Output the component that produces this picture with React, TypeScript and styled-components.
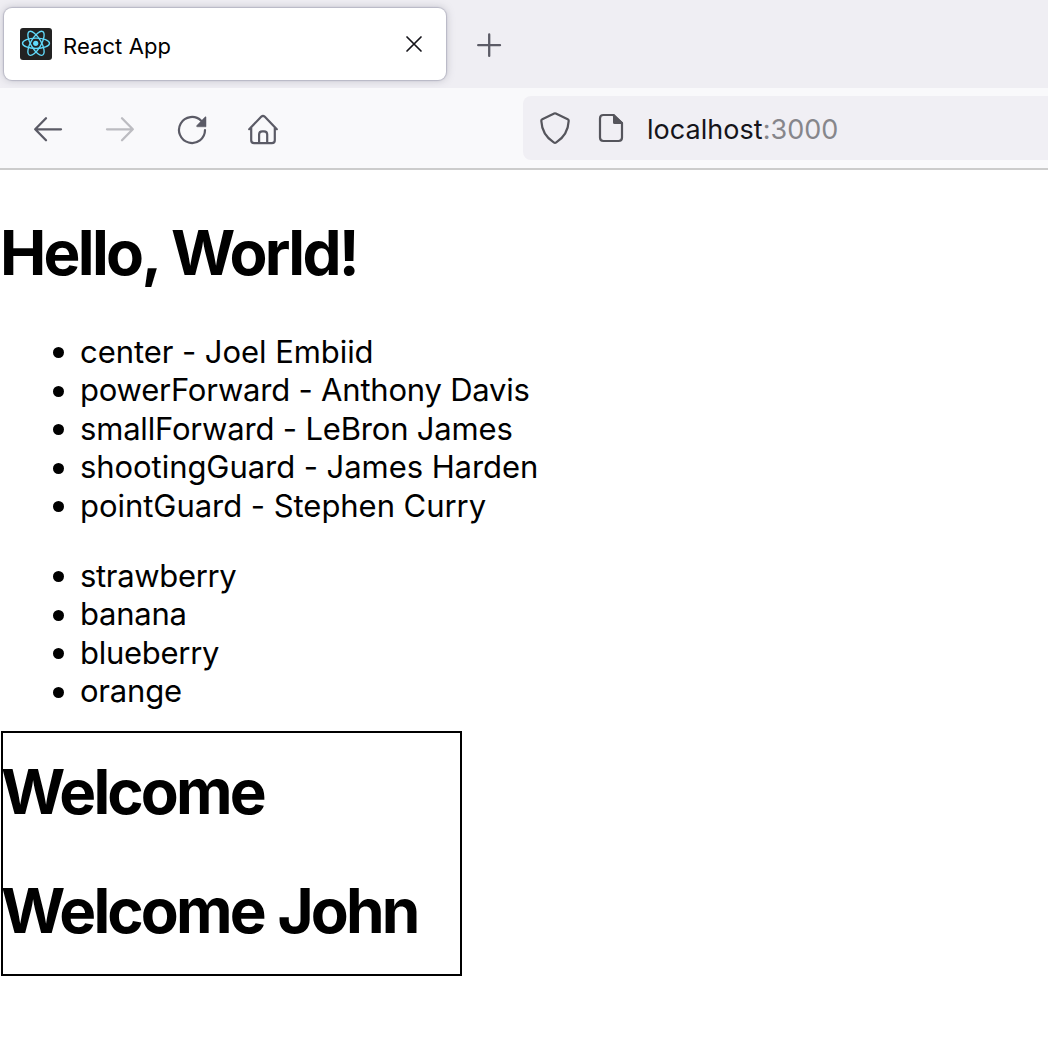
import React from "react";
import styled, { createGlobalStyle } from "styled-components";

const GlobalStyle = createGlobalStyle`
  * { box-sizing: border-box; }
  body {
    margin: 0;
    background: #fff;
    color: #000;
    font-family: Inter, "Liberation Sans", sans-serif;
    overflow: hidden;
  }
`;

const Window = styled.div`
  width: 100%;
  height: 1046px;
  display: flex;
  flex-direction: column;
  overflow: hidden;
`;

const TabStrip = styled.header`
  height: 88px;
  flex: none;
  display: flex;
  align-items: flex-start;
  padding: 8px 4px;
  background: #efeef3;
`;

const Tab = styled.div`
  width: 442px;
  height: 72px;
  display: flex;
  align-items: center;
  padding: 0 20px 0 16px;
  background: #fff;
  border-radius: 8px;
  box-shadow: 0 0 1px 1px #b9b9c6, 0 0 8px rgba(128, 128, 142, 0.45);
`;

const TabTitle = styled.span`
  flex: 1;
  padding: 4px 0 0 11px;
  font-size: 22px;
  line-height: 28px;
  letter-spacing: 0.08px;
`;

const IconButton = styled.button<{ $width: number; $height: number }>`
  width: ${(p) => p.$width}px;
  height: ${(p) => p.$height}px;
  display: flex;
  align-items: center;
  justify-content: center;
  padding: 0;
  border: 0;
  background: none;
  color: #5b5b66;

  &:disabled { color: #bcbcc1; }
`;

const CloseButton = styled(IconButton)`
  color: #15141a;
`;

const NewTab = styled(IconButton)`
  margin-left: 7px;
`;

const Toolbar = styled.nav`
  height: 82px;
  flex: none;
  display: flex;
  align-items: flex-start;
  padding: 8px 0 0 12px;
  background: #f9f9fb;
  border-bottom: 2px solid #ccc;
`;

const NavButtons = styled.div`
  width: 511px;
  flex: none;
  display: flex;
`;

const AddressBar = styled.div`
  flex: 1;
  height: 64px;
  display: flex;
  align-items: center;
  gap: 24px;
  padding-left: 16px;
  background: #f0eff4;
  border-radius: 8px 0 0 8px;
  color: #55555c;
`;

const Address = styled.span`
  font-size: 27px;
  line-height: 36px;
  margin-left: -4px;
  padding-top: 3px;
  letter-spacing: 0.03px;
  color: #15141a;
`;

const Port = styled.span`
  color: #86868b;
`;

const Page = styled.main`
  flex: 1;
  padding-top: 45px;
`;

const Title = styled.h1<{ $tracking?: number; $wordGap?: number }>`
  margin: 0;
  font-size: 62px;
  line-height: 76px;
  font-weight: 700;
  letter-spacing: ${(p) => p.$tracking ?? -2.9}px;
  word-spacing: ${(p) => p.$wordGap ?? 0}px;
  white-space: nowrap;
`;

const List = styled.ul<{ $top: number }>`
  margin: ${(p) => p.$top}px 0 0;
  padding: 0;
  list-style: none;
`;

const Item = styled.li<{ $tracking?: number }>`
  display: flex;
  align-items: center;
  gap: 16.3px;
  padding-left: 52.700px;
  font-size: 31px;
  line-height: 38.5px;
  letter-spacing: ${(p) => p.$tracking ?? 0}px;

  &::before {
    content: "";
    width: 11px;
    height: 11px;
    margin-top: 2px;
    border-radius: 50%;
    background: #000;
  }
`;

const WelcomeBox = styled.section`
  width: 461px;
  height: 245px;
  margin: 20.4px 0 0 1px;
  padding-top: 21px;
  display: flex;
  flex-direction: column;
  gap: 43px;
  border: 2px solid #000;

  ${Title} { margin-left: -2px; }
`;

const ReactLogo = () => (
  <svg width="32" height="32" viewBox="0 0 32 32" fill="none">
    <rect width="32" height="32" rx="3" fill="#222" />
    <g stroke="#61dafb" strokeWidth="1.35">
      <ellipse cx="16" cy="15.3" rx="13.5" ry="5.2" />
      <ellipse cx="16" cy="15.3" rx="13.5" ry="5.2" transform="rotate(60 16 15.3)" />
      <ellipse cx="16" cy="15.3" rx="13.5" ry="5.2" transform="rotate(120 16 15.3)" />
    </g>
    <circle cx="15.7" cy="15.3" r="2.6" fill="#61dafb" />
  </svg>
);

const CloseIcon = () => (
  <svg width="24" height="24" viewBox="0 0 24 24" fill="none" stroke="currentColor" strokeWidth="1.7" strokeLinecap="round">
    <path d="M5 5l14 14M19 5L5 19" />
  </svg>
);

const PlusIcon = () => (
  <svg width="32" height="32" viewBox="0 0 32 32" fill="none" stroke="currentColor" strokeWidth="2.3" strokeLinecap="round">
    <path d="M16.200 5.400v21.500M5.200 16.200h21.800" />
  </svg>
);

const BackIcon = () => (
  <svg width="32" height="32" viewBox="0 0 32 32" fill="none" stroke="currentColor" strokeWidth="2.3" strokeLinecap="round" strokeLinejoin="round">
    <path d="M29 16.3H3.2M14 5.3L3.2 16.3 14 27.3" />
  </svg>
);

const ForwardIcon = () => (
  <svg width="32" height="32" viewBox="0 0 32 32" fill="none" stroke="currentColor" strokeWidth="2.3" strokeLinecap="round" strokeLinejoin="round">
    <path d="M3 16.3h25.8M18 5.3l10.8 11L18 27.3" />
  </svg>
);

const ReloadIcon = () => (
  <svg width="32" height="32" viewBox="0 0 32 32" fill="none">
    <path d="M25.2 7.800A13 13 0 1 0 29 17" stroke="currentColor" strokeWidth="2.2" strokeLinecap="round" />
    <path d="M30 4v9.8h-8.600c-.9 0-1.100-.8-.5-1.400l7.900-8.200c.5-.5 1.200-.7 1.200-.2z" fill="currentColor" stroke="currentColor" strokeWidth=".5" />
  </svg>
);

const HomeIcon = () => (
  <svg width="32" height="32" viewBox="0 0 32 32" fill="none" stroke="currentColor" strokeWidth="2.2" strokeLinecap="round" strokeLinejoin="round">
    <path d="M2.2 16.2L14.4 3.6q1.6-1.5 3.2 0L29.8 16.2M4.2 15v12.3q0 2.9 2.9 2.9h17.8q2.9 0 2.9-2.9V15" />
    <path d="M12.1 30V21.500q0-3.200 3.200-3.200h1.700q3.200 0 3.200 3.200V30" />
  </svg>
);

const ShieldIcon = () => (
  <svg width="32" height="32" viewBox="0 0 32 32" fill="none" stroke="currentColor" strokeWidth="2.2" strokeLinejoin="round">
    <path d="M15.200 1.500q.8-.4 1.600 0l11.900 5.700q1.100.5 1 1.700C29.300 17 26.500 24.500 17.300 30.400q-1.300.9-2.600 0C5.500 24.500 2.700 17 2.300 8.900q-.1-1.200 1-1.700z" />
  </svg>
);

const PageIcon = () => (
  <svg width="32" height="32" viewBox="0 0 32 32" fill="none">
    <path d="M18 3H8.400Q5 3 5 6.400v19.200Q5 29 8.400 29h15.200q3.400 0 3.400-3.400V11z" stroke="currentColor" strokeWidth="2.200" strokeLinejoin="round" />
    <path d="M18 2v8.400q0 1.600 1.600 1.600H28v-1.200L19.200 2z" fill="currentColor" />
  </svg>
);

const players = [
  { position: "center", name: "Joel Embiid", tracking: -0.06 },
  { position: "powerForward", name: "Anthony Davis", tracking: -0.21 },
  { position: "smallForward", name: "LeBron James", tracking: -0.18 },
  { position: "shootingGuard", name: "James Harden", tracking: -0.06 },
  { position: "pointGuard", name: "Stephen Curry", tracking: -0.04 },
];

const fruits = [
  { name: "strawberry", tracking: -0.33 },
  { name: "banana", tracking: -0.22 },
  { name: "blueberry", tracking: -0.28 },
  { name: "orange", tracking: -0.2 },
];

export default function App() {
  return (
    <>
      <GlobalStyle />
      <Window>
        <TabStrip>
          <Tab>
            <ReactLogo />
            <TabTitle>React App</TabTitle>
            <CloseButton $width={24} $height={24} aria-label="Close tab"><CloseIcon /></CloseButton>
          </Tab>
          <NewTab $width={72} $height={74} aria-label="New tab"><PlusIcon /></NewTab>
        </TabStrip>
        <Toolbar>
          <NavButtons>
            <IconButton $width={72} $height={66} aria-label="Back"><BackIcon /></IconButton>
            <IconButton $width={72} $height={66} aria-label="Forward" disabled><ForwardIcon /></IconButton>
            <IconButton $width={72} $height={66} aria-label="Reload"><ReloadIcon /></IconButton>
            <IconButton $width={70} $height={66} aria-label="Home"><HomeIcon /></IconButton>
          </NavButtons>
          <AddressBar>
            <ShieldIcon />
            <PageIcon />
            <Address>localhost<Port>:3000</Port></Address>
          </AddressBar>
        </Toolbar>
        <Page>
          <Title $tracking={-2.7} $wordGap={1.5}>Hello, World!</Title>
          <List $top={41.6}>
            {players.map((p) => (
              <Item key={p.position} $tracking={p.tracking}>{p.position} - {p.name}</Item>
            ))}
          </List>
          <List $top={31.5}>
            {fruits.map((f) => <Item key={f.name} $tracking={f.tracking}>{f.name}</Item>)}
          </List>
          <WelcomeBox>
            <Title>Welcome</Title>
            <Title $wordGap={2}>Welcome John</Title>
          </WelcomeBox>
        </Page>
      </Window>
    </>
  );
}
